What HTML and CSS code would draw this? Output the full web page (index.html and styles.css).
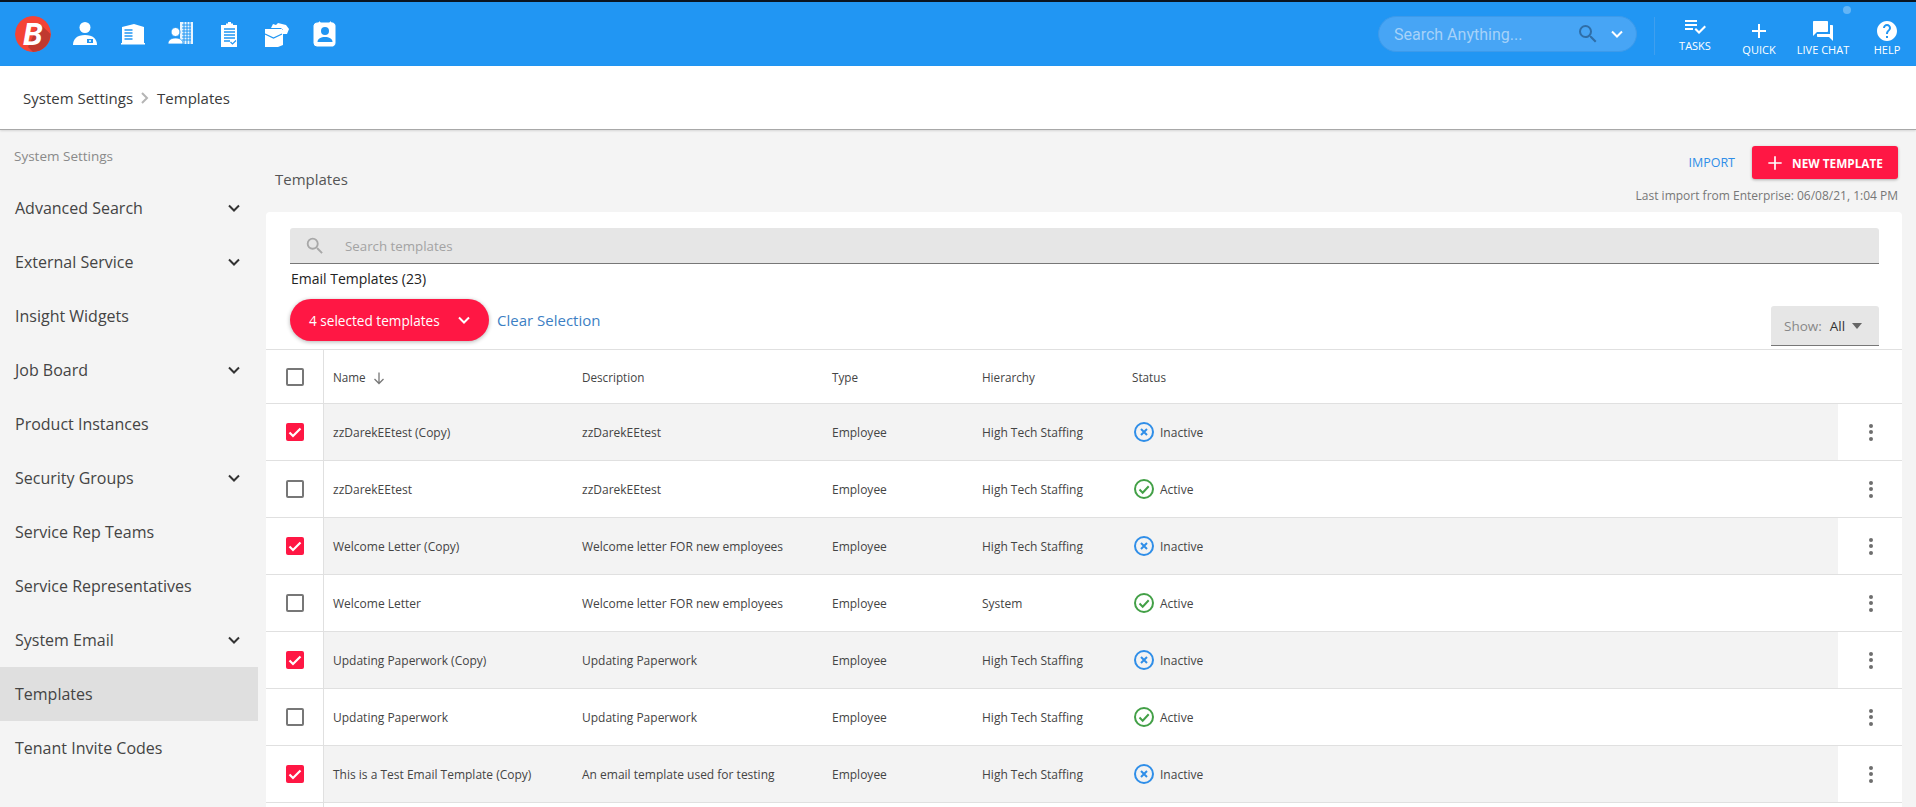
FILE: index.html
```html
<!DOCTYPE html>
<html lang="en">
<head>
<meta charset="utf-8">
<title>Templates</title>
<link rel="stylesheet" href="styles.css">
</head>
<body>
<header class="topbar">
  <div class="nav-left">
    <div class="logo">
      <svg viewBox="0 0 36 36" width="36" height="36"><circle cx="18" cy="18" r="18" fill="#f44336"/><path d="M13 31 L24 7 L35.500 18 A18 18 0 0 1 18 36 Z" fill="#c0392f"/></svg>
      <span class="logo-b">B</span>
    </div>
    <svg class="nav-icon" viewBox="0 0 26 26"><circle cx="13" cy="6.500" r="5.500" fill="#fff"/><path d="M1 24c0-6 4-10 12-10s12 4 12 10z" fill="#fff"/><rect x="15" y="18" width="6" height="4" fill="#2196f3"/><circle cx="18" cy="20" r="1" fill="#fff"/></svg>
    <svg class="nav-icon" viewBox="0 0 26 26"><path d="M2 6l12-3 10 3v16H2z" fill="#fff"/><path d="M4.500 9h8M4.500 12h8M4.500 15h8M4.500 18h8" stroke="#2196f3" stroke-width="1.500"/><rect x="1" y="22" width="24" height="1.500" fill="#fff"/></svg>
    <svg class="nav-icon" viewBox="0 0 26 26"><rect x="12" y="1" width="13" height="22" fill="#fff" opacity=".9"/><path d="M14 4h9M14 7h9M14 10h9M14 13h9M14 16h9M14 19h9M16 1v22M19 1v22M22 1v22" stroke="#2196f3"/><circle cx="7.500" cy="11" r="4.500" fill="#fff" stroke="#2196f3"/><path d="M0 23c0-4 3-6 7.500-6s7.500 2 7.500 6z" fill="#fff" stroke="#2196f3" stroke-width=".8"/></svg>
    <svg class="nav-icon" viewBox="0 0 26 26"><path d="M5 4h5V2.500h2V1h3v1.500h2V4h4v22H5z" fill="#fff"/><path d="M8 8h11M8 11h11M8 14h11M8 17h11M8 20h6" stroke="#2196f3" stroke-width="1.300"/><path d="M14.500 21l2 2 3.500-3.500" stroke="#2196f3" stroke-width="1.200" fill="none"/></svg>
    <svg class="nav-icon" viewBox="0 0 26 26"><path d="M9 3l3 1 2-2 8 2 3 4h-7l-1-1H7z" fill="#fff"/><path d="M1 8h17l1 1v15l-5 2H1z" fill="#fff"/><path d="M19 8h6l-2 5h-4z" fill="#fff"/><path d="M1 13l8.500 4 8.500-4" stroke="#2196f3" stroke-width="1.300" fill="none"/></svg>
    <svg class="nav-icon" viewBox="0 0 26 26"><path d="M5 2h2V1h1v1h10V1h1v1h2a3 3 0 0 1 2 2.500V22a3 3 0 0 1-2 3H5a3 3 0 0 1-3-3V4.500A3 3 0 0 1 5 2z" fill="#fff" stroke="#fff"/><circle cx="13" cy="10" r="4" fill="#2196f3"/><path d="M5.500 21c0-3.500 3.500-5 7.500-5s7.500 1.500 7.500 5z" fill="#2196f3"/></svg>
  </div>
  <div class="nav-right">
    <div class="global-search">
      <span class="global-placeholder">Search Anything...</span>
      <svg class="global-glass" viewBox="0 0 24 24" width="24" height="24"><path d="M15.500 14h-.79l-.28-.27A6.470 6.470 0 0 0 16 9.500 6.500 6.500 0 1 0 9.500 16c1.610 0 3.090-.59 4.230-1.570l.27.28v.79l5 4.990L20.490 19l-4.990-5zm-6 0C7.010 14 5 11.990 5 9.500S7.010 5 9.500 5 14 7.010 14 9.500 11.990 14 9.500 14z" fill="#2f6ea8"/></svg>
      <svg class="global-chev" viewBox="0 0 14 14" width="14" height="14"><path d="M2 4.500l5 5 5-5" fill="none" stroke="#fff" stroke-width="2"/></svg>
    </div>
    <div class="nav-divider"></div>
    <div class="action action-tasks">
      <svg viewBox="0 0 24 24" width="24" height="24"><path d="M14 10H2v2h12v-2zm0-4H2v2h12V6zM2 16h8v-2H2v2zm19.500-4.500L23 13l-6.990 7-4.510-4.500L13 14l3.010 3 5.490-5.500z" fill="#fff"/></svg>
      <span>TASKS</span>
    </div>
    <div class="action">
      <svg viewBox="0 0 24 24" width="24" height="24"><path d="M19 13h-6v6h-2v-6H5v-2h6V5h2v6h6v2z" fill="#fff"/></svg>
      <span>QUICK</span>
    </div>
    <div class="action">
      <svg viewBox="0 0 24 24" width="24" height="24"><path d="M21 6h-2v9H6v2c0 .55.45 1 1 1h11l4 4V7c0-.55-.45-1-1-1zm-4 6V3c0-.55-.45-1-1-1H3c-.55 0-1 .45-1 1v14l4-4h10c.55 0 1-.45 1-1z" fill="#fff"/></svg>
      <span>LIVE CHAT</span>
      <i class="chat-dot"></i>
    </div>
    <div class="action">
      <svg viewBox="0 0 24 24" width="24" height="24"><path d="M12 2C6.480 2 2 6.480 2 12s4.480 10 10 10 10-4.480 10-10S17.520 2 12 2zm1 17h-2v-2h2v2zm2.070-7.750l-.9.920C13.450 12.900 13 13.500 13 15h-2v-.5c0-1.100.45-2.100 1.170-2.830l1.240-1.260c.37-.36.59-.86.59-1.410 0-1.100-.9-2-2-2s-2 .9-2 2H8c0-2.210 1.790-4 4-4s4 1.790 4 4c0 .88-.36 1.680-.93 2.250z" fill="#fff"/></svg>
      <span>HELP</span>
    </div>
  </div>
</header>

<div class="breadcrumb">
  <span>System Settings</span>
  <svg viewBox="0 0 10 14" width="10" height="14"><path d="M2 2l5 5-5 5" fill="none" stroke="#b5b5b5" stroke-width="2"/></svg>
  <span>Templates</span>
</div>

<div class="main">
  <aside class="sidebar">
    <div class="side-title">System Settings</div>
    <div class="side-item">Advanced Search<svg class="chev" viewBox="0 0 14 14"><path d="M2 4.500l5 5 5-5"/></svg></div>
    <div class="side-item">External Service<svg class="chev" viewBox="0 0 14 14"><path d="M2 4.500l5 5 5-5"/></svg></div>
    <div class="side-item">Insight Widgets</div>
    <div class="side-item">Job Board<svg class="chev" viewBox="0 0 14 14"><path d="M2 4.500l5 5 5-5"/></svg></div>
    <div class="side-item">Product Instances</div>
    <div class="side-item">Security Groups<svg class="chev" viewBox="0 0 14 14"><path d="M2 4.500l5 5 5-5"/></svg></div>
    <div class="side-item">Service Rep Teams</div>
    <div class="side-item">Service Representatives</div>
    <div class="side-item">System Email<svg class="chev" viewBox="0 0 14 14"><path d="M2 4.500l5 5 5-5"/></svg></div>
    <div class="side-item side-active">Templates</div>
    <div class="side-item">Tenant Invite Codes</div>
  </aside>

  <section class="content">
    <div class="page-head">
      <h1 class="page-title">Templates</h1>
      <div class="head-actions">
        <div class="head-buttons">
          <span class="import">IMPORT</span>
          <button class="new-btn"><svg viewBox="0 0 24 24" width="20" height="20"><path d="M20 13h-7v7h-2v-7H4v-2h7V4h2v7h7v2z" fill="#fff"/></svg>NEW TEMPLATE</button>
        </div>
        <div class="last-import">Last import from Enterprise: 06/08/21, 1:04 PM</div>
      </div>
    </div>

    <div class="card">
      <div class="card-top">
        <div class="search-field">
          <svg viewBox="0 0 24 24" width="22" height="22"><path d="M15.500 14h-.79l-.28-.27A6.470 6.470 0 0 0 16 9.500 6.500 6.500 0 1 0 9.500 16c1.610 0 3.090-.59 4.230-1.570l.27.28v.79l5 4.990L20.490 19l-4.990-5zm-6 0C7.010 14 5 11.990 5 9.500S7.010 5 9.500 5 14 7.010 14 9.500 11.990 14 9.500 14z" fill="#a8a8a8"/></svg>
          <span>Search templates</span>
        </div>
        <div class="list-title">Email Templates (23)</div>
        <div class="select-row">
          <button class="pill">4 selected templates<svg viewBox="0 0 14 14" width="14" height="14"><path d="M2 4.500l5 5 5-5" fill="none" stroke="#fff" stroke-width="2"/></svg></button>
          <span class="clear">Clear Selection</span>
          <div class="show"><span class="show-label">Show:</span><span class="show-value">All</span><i class="caret"></i></div>
        </div>
      </div>

      <table class="grid">
        <colgroup><col class="c-check"><col class="c-name"><col class="c-desc"><col class="c-type"><col class="c-hier"><col class="c-status"><col class="c-menu"></colgroup>
        <thead>
          <tr>
            <th class="check"><i class="box"></i></th>
            <th>Name <svg viewBox="0 0 14 14" width="14" height="14"><path d="M7 1.500v11M2.500 8L7 12.500 11.500 8" fill="none" stroke="#777" stroke-width="1.300"/></svg></th>
            <th>Description</th><th>Type</th><th>Hierarchy</th><th>Status</th><th></th>
          </tr>
        </thead>
        <tbody>
          <tr class="sel">
            <td class="check"><i class="box on"><svg viewBox="0 0 18 18"><path d="M3.500 9.500l3.500 3.500 7.500-7.500"/></svg></i></td>
            <td>zzDarekEEtest (Copy)</td><td>zzDarekEEtest</td><td>Employee</td><td>High Tech Staffing</td>
            <td><span class="status"><svg class="st-off" viewBox="0 0 20 20"><circle cx="10" cy="10" r="9"/><path d="M7 7l6 6M13 7l-6 6"/></svg>Inactive</span></td>
            <td class="menu"><span class="kebab"><i></i><i></i><i></i></span></td>
          </tr>
          <tr>
            <td class="check"><i class="box"></i></td>
            <td>zzDarekEEtest</td><td>zzDarekEEtest</td><td>Employee</td><td>High Tech Staffing</td>
            <td><span class="status"><svg class="st-on" viewBox="0 0 20 20"><circle cx="10" cy="10" r="9"/><path d="M5.500 10.500l3.200 3.200 6-6.500"/></svg>Active</span></td>
            <td class="menu"><span class="kebab"><i></i><i></i><i></i></span></td>
          </tr>
          <tr class="sel">
            <td class="check"><i class="box on"><svg viewBox="0 0 18 18"><path d="M3.500 9.500l3.500 3.500 7.500-7.500"/></svg></i></td>
            <td>Welcome Letter (Copy)</td><td>Welcome letter FOR new employees</td><td>Employee</td><td>High Tech Staffing</td>
            <td><span class="status"><svg class="st-off" viewBox="0 0 20 20"><circle cx="10" cy="10" r="9"/><path d="M7 7l6 6M13 7l-6 6"/></svg>Inactive</span></td>
            <td class="menu"><span class="kebab"><i></i><i></i><i></i></span></td>
          </tr>
          <tr>
            <td class="check"><i class="box"></i></td>
            <td>Welcome Letter</td><td>Welcome letter FOR new employees</td><td>Employee</td><td>System</td>
            <td><span class="status"><svg class="st-on" viewBox="0 0 20 20"><circle cx="10" cy="10" r="9"/><path d="M5.500 10.500l3.200 3.200 6-6.500"/></svg>Active</span></td>
            <td class="menu"><span class="kebab"><i></i><i></i><i></i></span></td>
          </tr>
          <tr class="sel">
            <td class="check"><i class="box on"><svg viewBox="0 0 18 18"><path d="M3.500 9.500l3.500 3.500 7.500-7.500"/></svg></i></td>
            <td>Updating Paperwork (Copy)</td><td>Updating Paperwork</td><td>Employee</td><td>High Tech Staffing</td>
            <td><span class="status"><svg class="st-off" viewBox="0 0 20 20"><circle cx="10" cy="10" r="9"/><path d="M7 7l6 6M13 7l-6 6"/></svg>Inactive</span></td>
            <td class="menu"><span class="kebab"><i></i><i></i><i></i></span></td>
          </tr>
          <tr>
            <td class="check"><i class="box"></i></td>
            <td>Updating Paperwork</td><td>Updating Paperwork</td><td>Employee</td><td>High Tech Staffing</td>
            <td><span class="status"><svg class="st-on" viewBox="0 0 20 20"><circle cx="10" cy="10" r="9"/><path d="M5.500 10.500l3.200 3.200 6-6.500"/></svg>Active</span></td>
            <td class="menu"><span class="kebab"><i></i><i></i><i></i></span></td>
          </tr>
          <tr class="sel">
            <td class="check"><i class="box on"><svg viewBox="0 0 18 18"><path d="M3.500 9.500l3.500 3.500 7.500-7.500"/></svg></i></td>
            <td>This is a Test Email Template (Copy)</td><td>An email template used for testing</td><td>Employee</td><td>High Tech Staffing</td>
            <td><span class="status"><svg class="st-off" viewBox="0 0 20 20"><circle cx="10" cy="10" r="9"/><path d="M7 7l6 6M13 7l-6 6"/></svg>Inactive</span></td>
            <td class="menu"><span class="kebab"><i></i><i></i><i></i></span></td>
          </tr>
          <tr>
            <td class="check"></td><td></td><td></td><td></td><td></td><td></td><td class="menu"></td>
          </tr>
        </tbody>
      </table>
    </div>
  </section>
</div>
</body>
</html>
```

FILE: styles.css
```css
* { box-sizing: border-box; }
html, body { margin: 0; height: 807px; overflow: hidden; }
body { font-family: "Open Sans", "Liberation Sans", sans-serif; background: #f4f4f4; color: #333; width: 1916px; }

.topbar { height: 66px; border-top: 2px solid #0a1420; background: #2196f3; display: flex; justify-content: space-between; padding-left: 15px; }
.nav-left { display: flex; align-items: center; }
.logo { width: 36px; height: 36px; position: relative; margin-right: 21px; border-radius: 50%; overflow: hidden; }
.logo-b { position: absolute; left: 0; right: 0; top: 0; text-align: center; color: #fff; font: italic 700 32px/36px "Roboto", sans-serif; }
.nav-icon { width: 26px; height: 26px; margin-right: 22px; }

.nav-right { display: flex; align-items: flex-start; position: relative; margin-right: -3px; }
.global-search { width: 259px; height: 36px; margin-top: 14px; margin-left: 1px; border-radius: 18px; background: #47a5f5; border: 1px solid #3d9aea; display: flex; align-items: center; padding: 0 9px 0 15px; }
.global-placeholder { font: 16px "Roboto", sans-serif; color: #a6d2f9; flex: 1; }
.global-glass { margin-right: 10px; }
.global-chev { margin-right: 3px; }
.nav-divider { width: 1px; height: 38px; margin: 15px 8px 0 17px; background: #3f9fef; }
.action { width: 64px; display: flex; flex-direction: column; align-items: center; position: relative; padding-top: 17px; color: #fff; font-size: 11px; font-weight: 500; line-height: 14px; }
.action span { margin-top: 0; white-space: nowrap; }
.action-tasks { padding-top: 12px; }
.action-tasks span { margin-top: 1px; }
.chat-dot { position: absolute; left: 52px; top: 4px; width: 8px; height: 8px; border-radius: 50%; background: #64b5f6; }

.breadcrumb { height: 64px; background: #fff; border-bottom: 1px solid #a8a8a8; box-shadow: 0 1px 2px rgba(0,0,0,.12); display: flex; align-items: center; gap: 7px; padding-left: 23px; font-size: 15px; color: #3a3a3a; position: relative; }

.main { display: flex; height: 677px; }
.sidebar { width: 258px; flex: none; }
.side-title { height: 51px; padding: 17px 0 0 14px; font-size: 13.500px; line-height: 18px; color: #8a8a8a; }
.side-item { height: 54px; display: flex; align-items: center; justify-content: space-between; padding: 0 17px 0 15px; font-size: 16px; color: #444; }
.side-active { background: #dfdfdf; }
.chev { width: 14px; height: 14px; }
.chev path { fill: none; stroke: #333; stroke-width: 2; }

.content { width: 1636px; margin-left: 8px; }
.page-head { height: 82px; display: flex; justify-content: space-between; }
.page-title { margin: 39px 0 0 9px; font-size: 15px; line-height: 20px; font-weight: 400; color: #555; }
.head-actions { display: flex; flex-direction: column; align-items: flex-end; padding: 16px 4px 0 0; }
.head-buttons { display: flex; align-items: center; gap: 17px; }
.import { font-size: 12.500px; font-weight: 500; color: #2f8ee8; }
.new-btn { width: 146px; height: 33px; border: 0; border-radius: 3px; background: #ff1744; color: #fff; display: flex; align-items: center; justify-content: center; gap: 7px; font: 700 11.800px "Open Sans", sans-serif; box-shadow: 0 1px 3px rgba(0,0,0,.3); padding: 0 2px 0 0; }
.last-import { margin-top: 9px; font-size: 12px; line-height: 16px; color: #777; }

.card { background: #fff; border-radius: 4px 4px 0 0; height: 600px; overflow: hidden; }
.card-top { padding: 16px 23px 0 24px; }
.search-field { height: 36px; background: #e6e6e6; border-bottom: 1px solid #777; border-radius: 3px 3px 0 0; display: flex; align-items: center; padding-left: 14px; gap: 19px; font-size: 13.300px; color: #a3a3a3; }
.list-title { margin-top: 5px; margin-left: 1px; font-size: 14px; line-height: 20px; color: #222; font-weight: 500; }
.select-row { display: flex; align-items: flex-start; margin-top: 10px; height: 50px; }
.pill { width: 199px; height: 42px; border: 0; border-radius: 21px; background: #ff1744; color: #fff; font: 13.600px "Open Sans", sans-serif; display: flex; align-items: center; padding: 0 18px 0 19px; justify-content: space-between; box-shadow: 0 1px 4px rgba(0,0,0,.3); }
.clear { margin: 10px 0 0 8px; font-size: 15px; line-height: 22px; color: #3d7fc4; }
.show { margin-left: auto; margin-top: 7px; width: 108px; height: 40px; background: #e6e6e6; border-bottom: 1px solid #777; border-radius: 3px 3px 0 0; display: flex; align-items: center; padding-left: 13px; font-size: 13.500px; }
.show-label { color: #888; margin-right: 8px; }
.show-value { color: #333; }
.caret { margin-left: 7px; border: 5px solid transparent; border-top: 6px solid #666; border-bottom: 0; }

.grid { width: 100%; table-layout: fixed; border-collapse: separate; border-spacing: 0; font-size: 12px; color: #444; }
.c-check { width: 58px; } .c-name { width: 249px; } .c-desc { width: 250px; } .c-type { width: 150px; } .c-hier { width: 150px; } .c-menu { width: 64px; }
.grid th, .grid td { text-align: left; font-weight: 400; padding: 0 0 0 9px; border-top: 1px solid #e0e0e0; height: 57px; white-space: nowrap; }
.grid th { height: 54px; font-size: 11.700px; }
.grid th svg { vertical-align: -3px; margin-left: 3px; }
.grid .check { padding: 0 0 0 20px; border-right: 1px solid #e0e0e0; }
.sel td { background: #f3f3f3; }
.sel td.check, .sel td.menu { background: #fff; }
.box { display: block; width: 18px; height: 18px; border: 2px solid #777; border-radius: 2px; }
.box.on { background: #ff1744; border: 0; }
.box svg { display: block; width: 18px; height: 18px; }
.box svg path { fill: none; stroke: #fff; stroke-width: 2.200; }
.status { display: inline-flex; align-items: center; gap: 6px; margin: 4px 0 0 2px; font-size: 12px; }
.status svg { width: 20px; height: 20px; flex: none; fill: none; stroke-width: 2; }
.st-off { stroke: #2f8ee8; }
.st-on { stroke: #43a047; }
.kebab { display: flex; flex-direction: column; gap: 2.500px; width: 4px; margin-left: 22px; }
.kebab i { width: 4px; height: 4px; border-radius: 50%; background: #6e6e6e; }
```
